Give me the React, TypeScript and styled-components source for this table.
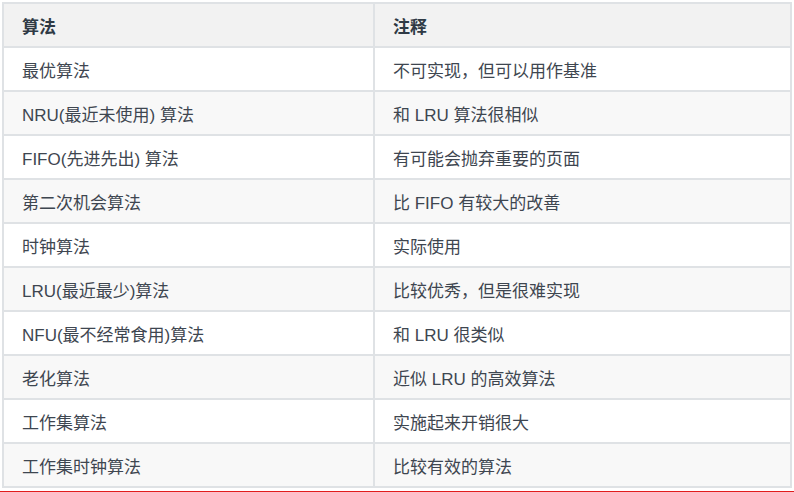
import React from "react";
import styled, { createGlobalStyle } from "styled-components";

const GlobalStyle = createGlobalStyle`
  html, body {
    margin: 0;
    padding: 0;
    background: #ffffff;
  }
  body {
    font-family: "Liberation Sans", "Noto Sans CJK SC", sans-serif;
  }
`;

const Page = styled.div`
  width: 794px;
  height: 492px;
  padding: 2px 0 0 2px;
  box-sizing: border-box;
  display: flex;
  flex-direction: column;
`;

const Table = styled.table`
  width: 788px;
  border-collapse: collapse;
  table-layout: fixed;
  font-family: "Liberation Sans", "Noto Sans CJK SC", sans-serif;
  font-size: 17px;
  color: #3e4650;
`;

const Col = styled.col<{ $w: number }>`
  width: ${(p) => p.$w}px;
`;

const Row = styled.tr<{ $alt?: boolean }>`
  height: 44px;
  background: ${(p) => (p.$alt ? "#f8f8f8" : "#ffffff")};
`;

const HeadRow = styled.tr`
  height: 44px;
  background: #f2f2f2;
`;

const Th = styled.th`
  border: 2px solid #dfe2e5;
  padding: 0 18px;
  text-align: left;
  font-weight: 700;
  color: #2f3a45;
`;

const Td = styled.td`
  border: 2px solid #dfe2e5;
  padding: 0 18px;
  text-align: left;
  font-weight: 400;
`;

const RedRule = styled.div`
  margin-top: 3px;
  margin-left: -2px;
  width: 794px;
  height: 1px;
  background: #e11d1d;
`;

const rows: [string, string][] = [
  ["最优算法", "不可实现，但可以用作基准"],
  ["NRU(最近未使用) 算法", "和 LRU 算法很相似"],
  ["FIFO(先进先出) 算法", "有可能会抛弃重要的页面"],
  ["第二次机会算法", "比 FIFO 有较大的改善"],
  ["时钟算法", "实际使用"],
  ["LRU(最近最少)算法", "比较优秀，但是很难实现"],
  ["NFU(最不经常食用)算法", "和 LRU 很类似"],
  ["老化算法", "近似 LRU 的高效算法"],
  ["工作集算法", "实施起来开销很大"],
  ["工作集时钟算法", "比较有效的算法"],
];

export default function App() {
  return (
    <>
      <GlobalStyle />
      <Page>
        <Table>
          <colgroup>
            <Col $w={371} />
            <Col $w={417} />
          </colgroup>
          <thead>
            <HeadRow>
              <Th>算法</Th>
              <Th>注释</Th>
            </HeadRow>
          </thead>
          <tbody>
            {rows.map(([a, b], i) => (
              <Row key={a} $alt={i % 2 === 1}>
                <Td>{a}</Td>
                <Td>{b}</Td>
              </Row>
            ))}
          </tbody>
        </Table>
        <RedRule />
      </Page>
    </>
  );
}
